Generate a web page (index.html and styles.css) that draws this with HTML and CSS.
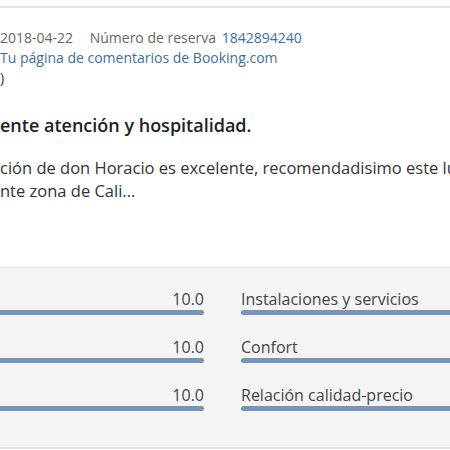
FILE: index.html
```html
<!DOCTYPE html>
<html>
<head>
    <meta charset="UTF-8">
    <meta name="viewport" content="width=device-width, initial-scale=1.0">
    <title>Comentario</title>
    <link rel="stylesheet" href="styles.css">
</head>
<body>
    <div class="review">
        <div class="meta">
            <div class="meta-line">
                <span class="date">2018-04-22</span>
                <span class="label">Número de reserva</span>
                <a class="link" href="#">1842894240</a>
            </div>
            <div class="meta-line"><a class="link" href="#">Tu página de comentarios de Booking.com</a></div>
            <div class="meta-line dark">)</div>
        </div>

        <h2 class="title">ente atención y hospitalidad.</h2>
        <p class="body">ción de don Horacio es excelente, recomendadisimo este lu<br>nte zona de Cali...</p>
    </div>

    <div class="scores">
        <div class="score">
            <div class="score-head num">10.0</div>
            <div class="bar"></div>
        </div>
        <div class="score">
            <div class="score-head">Instalaciones y servicios</div>
            <div class="bar"></div>
        </div>
        <div class="score">
            <div class="score-head num">10.0</div>
            <div class="bar"></div>
        </div>
        <div class="score">
            <div class="score-head">Confort</div>
            <div class="bar"></div>
        </div>
        <div class="score">
            <div class="score-head num">10.0</div>
            <div class="bar"></div>
        </div>
        <div class="score">
            <div class="score-head">Relación calidad-precio</div>
            <div class="bar"></div>
        </div>
    </div>
</body>
</html>
```

FILE: styles.css
```css
html, body {
    overflow: hidden;
}
body {
    margin: 0;
    font-family: "Open Sans", "Noto Sans", sans-serif;
    color: #333;
    background: #fff;
}
.review {
    margin-top: 6px;
    border-top: 2px solid #e6e6e6;
    padding-top: 20px;
    height: 232px;
    box-sizing: border-box;
}
.meta {
    font-size: 14px;
    line-height: 20px;
    color: #666;
}
.meta-line {
    white-space: nowrap;
}
.date {
    margin-right: 13px;
}
.label {
    margin-right: 2px;
}
.link {
    color: #3d6ea6;
    text-decoration: none;
}
.dark {
    color: #333;
}
.title {
    font-size: 18px;
    font-weight: 600;
    margin: 25px 0 0;
    line-height: 24px;
    color: #222;
}
.body {
    font-size: 16.5px;
    line-height: 23px;
    margin: 19px 0 0;
    white-space: nowrap;
}
.scores {
    margin-top: 29px;
    width: 800px;
    background: #f4f4f4;
    border-top: 1px solid #e9e9e9;
    border-bottom: 2px solid #e2e2e2;
    padding: 21px 0 36px;
    display: grid;
    grid-template-columns: 204px 364px;
    column-gap: 37px;
    row-gap: 22px;
}
.score-head {
    font-size: 16px;
    line-height: 20px;
    color: #444;
}
.num {
    text-align: right;
}
.bar {
    height: 5px;
    margin-top: 1px;
    background: #7b93b9;
    border-radius: 3px;
}
.score:nth-child(odd) .bar {
    border-radius: 0 3px 3px 0;
}
```
